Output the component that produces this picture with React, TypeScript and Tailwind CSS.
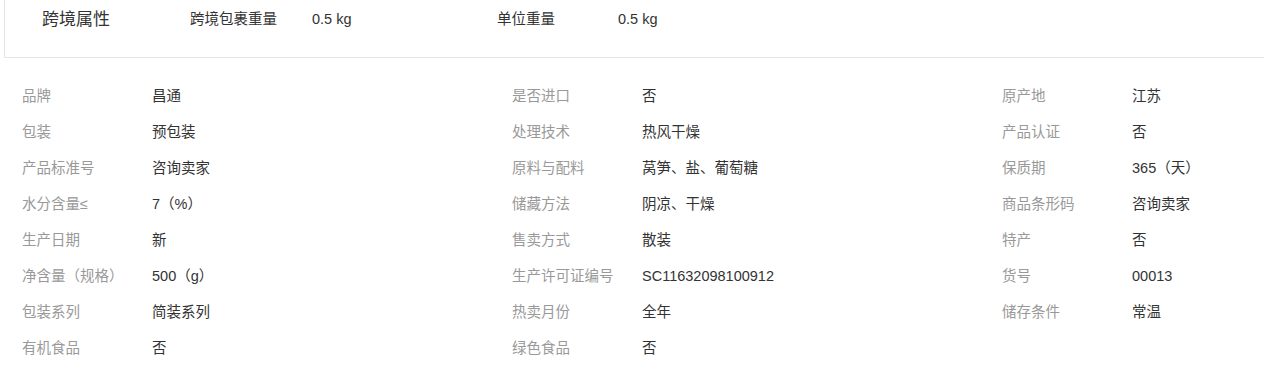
const rows: [string, string][] = [
  ["品牌", "昌通"],
  ["是否进口", "否"],
  ["原产地", "江苏"],
  ["包装", "预包装"],
  ["处理技术", "热风干燥"],
  ["产品认证", "否"],
  ["产品标准号", "咨询卖家"],
  ["原料与配料", "莴笋、盐、葡萄糖"],
  ["保质期", "365（天）"],
  ["水分含量≤", "7（%）"],
  ["储藏方法", "阴凉、干燥"],
  ["商品条形码", "咨询卖家"],
  ["生产日期", "新"],
  ["售卖方式", "散装"],
  ["特产", "否"],
  ["净含量（规格）", "500（g）"],
  ["生产许可证编号", "SC11632098100912"],
  ["货号", "00013"],
  ["包装系列", "简装系列"],
  ["热卖月份", "全年"],
  ["储存条件", "常温"],
  ["有机食品", "否"],
  ["绿色食品", "否"],
];

export default function App() {
  return (
    <main className="w-[1264px] h-[368px] overflow-hidden bg-white font-['Liberation_Sans','Noto_Sans_CJK_SC',sans-serif]">
      <div className="ml-[4px] h-[58px] border-l border-b border-[#e6e6e6] flex items-start pt-[9px] text-[#333]">
        <div className="pl-[37px] w-[185px] text-[17px] leading-[22px]">跨境属性</div>
        <div className="flex text-[14.5px] leading-[20px]">
          <span className="w-[122px]">跨境包裹重量</span>
          <span className="w-[185px]">0.5 kg</span>
          <span className="w-[121px]">单位重量</span>
          <span>0.5 kg</span>
        </div>
      </div>

      <div className="mt-[21px] pl-[22px] grid grid-cols-[490px_490px_1fr] text-[14.5px]">
        {rows.map(([k, v]) => (
          <div key={k} className="flex items-center h-[36px]">
            <span className="w-[130px] text-[#999]">{k}</span>
            <span className="text-[#333]">{v}</span>
          </div>
        ))}
      </div>
    </main>
  );
}
